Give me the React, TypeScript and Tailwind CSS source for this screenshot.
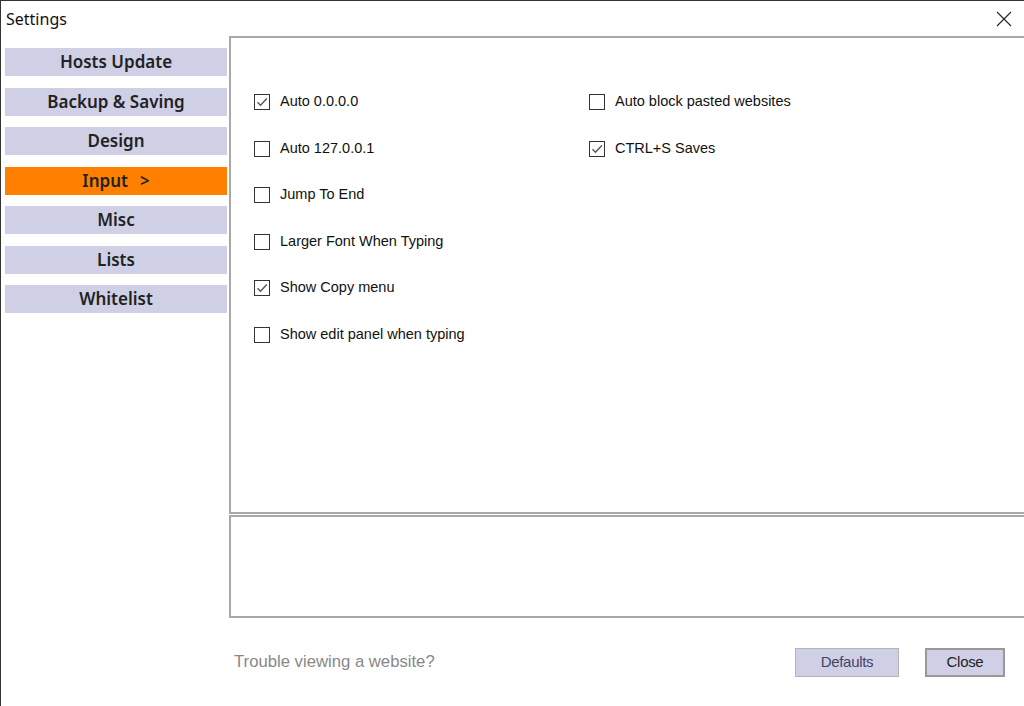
import React from 'react';

type Option = { label: string; checked: boolean };

const leftOptions: Option[] = [
    { label: 'Auto 0.0.0.0', checked: true },
    { label: 'Auto 127.0.0.1', checked: false },
    { label: 'Jump To End', checked: false },
    { label: 'Larger Font When Typing', checked: false },
    { label: 'Show Copy menu', checked: true },
    { label: 'Show edit panel when typing', checked: false },
];

const rightOptions: Option[] = [
    { label: 'Auto block pasted websites', checked: false },
    { label: 'CTRL+S Saves', checked: true },
];

const tabs = ['Hosts Update', 'Backup & Saving', 'Design', 'Input', 'Misc', 'Lists', 'Whitelist'];

function CheckRow({ label, checked }: Option) {
    return (
        <div className="flex items-center h-[46.5px]">
            <span className="w-[16px] h-[16px] border border-[#333] bg-white flex items-center justify-center">
                {checked && (
                    <svg width="12" height="12" viewBox="0 0 12 12">
                        <path d="M1.5 6.2 L4.5 9.2 L10.8 2.5" fill="none" stroke="#555" strokeWidth="1.4" />
                    </svg>
                )}
            </span>
            <span className="ml-[10px] text-[14.5px] text-[#111] font-['Liberation_Sans',Arial,sans-serif]">
                {label}
            </span>
        </div>
    );
}

export default function App() {
    return (
        <div className="relative w-[1024px] h-[706px] overflow-hidden bg-white border-l border-t border-[#333] font-['Noto_Sans',sans-serif]">
            <div className="flex items-center justify-between h-[35px] pl-[5px] pr-[12px]">
                <span className="text-[16px] text-[#111] leading-none">Settings</span>
                <svg width="16" height="16" viewBox="0 0 16 16">
                    <path d="M1 1 L15 15 M15 1 L1 15" stroke="#222" strokeWidth="1.1" />
                </svg>
            </div>
            <div className="flex">
                <div className="w-[228px] shrink-0 pl-[4px] pr-[2px] pt-[12px] flex flex-col gap-[11.5px]">
                    {tabs.map((t) => (
                        <div
                            key={t}
                            className={`h-[28px] flex items-center justify-center text-[17px] font-semibold text-[#222] ${
                                t === 'Input' ? 'bg-[#ff8000]' : 'bg-[#cfcfe6]'
                            }`}
                        >
                            {t === 'Input' ? (
                                <span>
                                    Input<span className="ml-[12px]">&gt;</span>
                                </span>
                            ) : (
                                t
                            )}
                        </div>
                    ))}
                </div>
                <div className="w-[820px] shrink-0 flex flex-col">
                    <div className="h-[478px] border-2 border-[#a8a8a8] flex pl-[23px] pt-[41px]">
                        <div className="w-[335px]">
                            {leftOptions.map((o) => (
                                <CheckRow key={o.label} {...o} />
                            ))}
                        </div>
                        <div>
                            {rightOptions.map((o) => (
                                <CheckRow key={o.label} {...o} />
                            ))}
                        </div>
                    </div>
                    <div className="h-[103px] mt-[1px] border-2 border-[#a8a8a8]" />
                    <div className="flex items-center h-[90px] pl-[5px] pb-[2px]">
                        <span className="text-[16.7px] text-[#888] font-['Liberation_Sans',Arial,sans-serif]">
                            Trouble viewing a website?
                        </span>
                        <div className="ml-auto mr-[44px] flex gap-[26px]">
                            <button
                                type="button"
                                className="w-[104px] h-[29px] bg-[#cfcfe6] border border-[#b4b4b4] text-[15px] text-[#444466] font-['Liberation_Sans',Arial,sans-serif] tracking-[-0.3px]"
                            >
                                Defaults
                            </button>
                            <button
                                type="button"
                                className="w-[80px] h-[29px] bg-[#cfcfe6] border-2 border-[#999] text-[15px] text-[#222] font-['Liberation_Sans',Arial,sans-serif] tracking-[-0.3px]"
                            >
                                Close
                            </button>
                        </div>
                    </div>
                </div>
            </div>
        </div>
    );
}
